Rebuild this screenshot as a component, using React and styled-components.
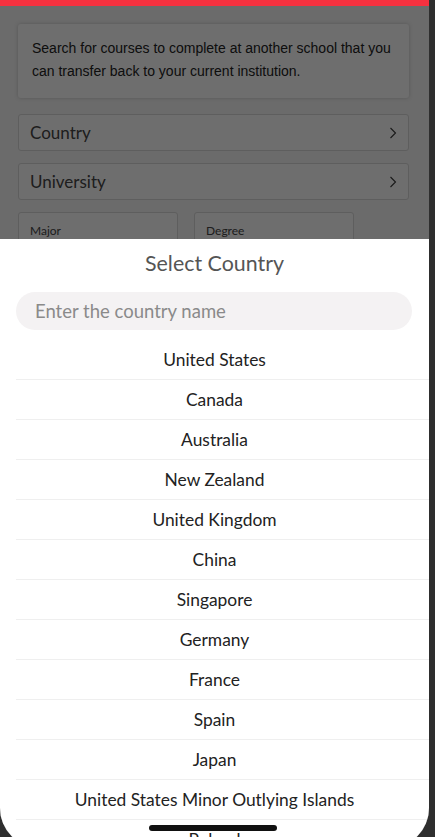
import styled, { createGlobalStyle } from 'styled-components';

const countries = [
  'United States',
  'Canada',
  'Australia',
  'New Zealand',
  'United Kingdom',
  'China',
  'Singapore',
  'Germany',
  'France',
  'Spain',
  'Japan',
  'United States Minor Outlying Islands',
  'Poland',
];

const GlobalStyle = createGlobalStyle`
  html, body {
    margin: 0;
    padding: 0;
    background: #2e2e2e;
  }
  * {
    box-sizing: border-box;
  }
`;

const Chevron = () => (
  <svg width="10" height="14" viewBox="0 0 10 14" fill="none">
    <path d="M2.5 2 L7.5 7 L2.5 12" stroke="#3a3a3a" strokeWidth="1.1" />
  </svg>
);

const App = () => {
  return (
    <>
      <GlobalStyle />
      <Frame>
        <Screen>
          <RedBar />
          <Content>
            <InfoCard>
              Search for courses to complete at another school that you can transfer back to your current institution.
            </InfoCard>
            <Field>
              Country
              <Chevron />
            </Field>
            <Field>
              University
              <Chevron />
            </Field>
            <SmallRow>
              <SmallField>Major</SmallField>
              <SmallField>Degree</SmallField>
            </SmallRow>
          </Content>
          <Overlay />
          <Sheet>
            <Title>Select Country</Title>
            <Search placeholder="Enter the country name" />
            <List>
              {countries.map((c) => (
                <Item key={c}>{c}</Item>
              ))}
            </List>
          </Sheet>
          <HomeBar />
        </Screen>
      </Frame>
    </>
  );
};

const Frame = styled.div`
  width: 435px;
  height: 837px;
  overflow: hidden;
  background: #2e2e2e;
`;

const Screen = styled.div`
  position: relative;
  width: 429px;
  height: 848px;
  background: #f3f3f3;
  border-radius: 0 0 40px 40px;
  overflow: hidden;
`;

const RedBar = styled.div`
  height: 6px;
  background: #f5313f;
  position: relative;
  z-index: 2;
`;

const Content = styled.div`
  display: flex;
  flex-direction: column;
  padding: 18px 20px 0 18px;
  font-family: 'Lato', 'Noto Sans', sans-serif;
`;

const InfoCard = styled.div`
  background: #fafafa;
  border-radius: 3px;
  box-shadow: 0 0 4px rgba(0, 0, 0, 0.18);
  padding: 13px 10px 15px 14px;
  font-family: 'Liberation Sans', Arial, sans-serif;
  font-size: 14px;
  line-height: 23px;
  color: #222;
  margin-bottom: 16px;
`;

const Field = styled.div`
  display: flex;
  align-items: center;
  justify-content: space-between;
  height: 37px;
  padding: 0 10px 0 11px;
  background: #fafafa;
  border: 1px solid #d6d6d6;
  border-radius: 3px;
  font-size: 17px;
  color: #444;
  margin-bottom: 12px;
`;

const SmallRow = styled.div`
  display: flex;
  gap: 16px;
`;

const SmallField = styled.div`
  width: 160px;
  height: 48px;
  padding: 10px 11px;
  background: #fafafa;
  border: 1px solid #d6d6d6;
  border-radius: 3px;
  font-size: 12px;
  color: #444;
`;

const Overlay = styled.div`
  position: absolute;
  inset: 0;
  background: rgba(0, 0, 0, 0.56);
`;

const Sheet = styled.div`
  position: absolute;
  top: 239px;
  left: 0;
  right: 0;
  bottom: 0;
  background: #fff;
  display: flex;
  flex-direction: column;
  align-items: stretch;
  padding: 0 0 0 16px;
  font-family: 'Lato', 'Noto Sans', sans-serif;
  & > * {
    flex-shrink: 0;
  }
`;

const Title = styled.div`
  text-align: center;
  font-size: 21.4px;
  color: #555;
  height: 53px;
  padding-top: 11px;
  padding-right: 16px;
`;

const Search = styled.input`
  height: 38px;
  width: 396px;
  border: none;
  outline: none;
  border-radius: 19px;
  background: #f4f2f3;
  padding: 0 19px;
  font-family: 'Lato', 'Noto Sans', sans-serif;
  font-size: 18.5px;
  color: #333;
  &::placeholder {
    color: #8a8a8a;
  }
`;

const List = styled.div`
  display: flex;
  flex-direction: column;
  margin-top: 10px;
`;

const Item = styled.div`
  flex-shrink: 0;
  height: 40px;
  display: flex;
  align-items: center;
  justify-content: center;
  padding-right: 16px;
  border-bottom: 1px solid #efefef;
  font-size: 17.4px;
  color: #222;
`;

const HomeBar = styled.div`
  position: absolute;
  left: 149px;
  top: 825px;
  width: 128px;
  height: 6px;
  border-radius: 3px;
  background: #111;
`;

export default App;
